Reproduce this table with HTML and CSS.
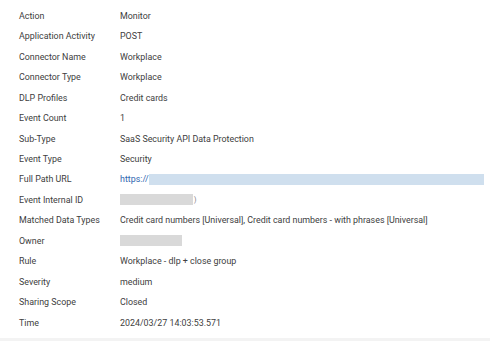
FILE: index.html
```html
<!DOCTYPE html>
<html>
<head>
<meta charset="utf-8">
<link rel="stylesheet" href="styles.css">
</head>
<body>
<div class="details">
  <div class="row"><div class="label">Action</div><div class="value">Monitor</div></div>
  <div class="row"><div class="label">Application Activity</div><div class="value">POST</div></div>
  <div class="row"><div class="label">Connector Name</div><div class="value">Workplace</div></div>
  <div class="row"><div class="label">Connector Type</div><div class="value">Workplace</div></div>
  <div class="row"><div class="label">DLP Profiles</div><div class="value">Credit cards</div></div>
  <div class="row"><div class="label">Event Count</div><div class="value">1</div></div>
  <div class="row"><div class="label">Sub-Type</div><div class="value">SaaS Security API Data Protection</div></div>
  <div class="row"><div class="label">Event Type</div><div class="value">Security</div></div>
  <div class="row"><div class="label">Full Path URL</div><div class="value"><span class="link">https://</span><span class="redact-url"></span></div></div>
  <div class="row"><div class="label">Event Internal ID</div><div class="value"><span class="redact redact-id"></span><span class="tail">)</span></div></div>
  <div class="row"><div class="label">Matched Data Types</div><div class="value">Credit card numbers [Universal], Credit card numbers - with phrases [Universal]</div></div>
  <div class="row"><div class="label">Owner</div><div class="value"><span class="redact redact-owner"></span></div></div>
  <div class="row"><div class="label">Rule</div><div class="value">Workplace - dlp + close group</div></div>
  <div class="row"><div class="label">Severity</div><div class="value">medium</div></div>
  <div class="row"><div class="label">Sharing Scope</div><div class="value">Closed</div></div>
  <div class="row"><div class="label">Time</div><div class="value">2024/03/27 14:03:53.571</div></div>
</div>
<div class="footer"></div>
</body>
</html>
```
FILE: styles.css
```css
html, body {
  margin: 0;
  padding: 0;
  background: #ffffff;
}
body {
  font-family: Roboto, "Liberation Sans", sans-serif;
  font-size: 8.9px;
  color: #404040;
  width: 490px;
  height: 341px;
  overflow: hidden;
  display: flex;
  flex-direction: column;
}
.details {
  padding: 5.5px 0 0 19px;
  display: flex;
  flex-direction: column;
  flex: 1;
}
.row {
  display: grid;
  grid-template-columns: 101px 1fr;
  height: 20.47px;
  align-items: center;
}
.value {
  display: flex;
  align-items: center;
  white-space: nowrap;
}
.link {
  color: #2f66b0;
}
.redact-url {
  display: inline-block;
  width: 335px;
  height: 11px;
  background: #cfdfee;
}
.redact {
  display: inline-block;
  height: 11px;
  background: #d9d9d9;
}
.redact-id {
  width: 73px;
}
.redact-owner {
  width: 62px;
}
.tail {
  margin-left: 1px;
  color: #777;
  font-size: 7px;
}
.footer {
  height: 3px;
  background: #f3f3f3;
}
```
